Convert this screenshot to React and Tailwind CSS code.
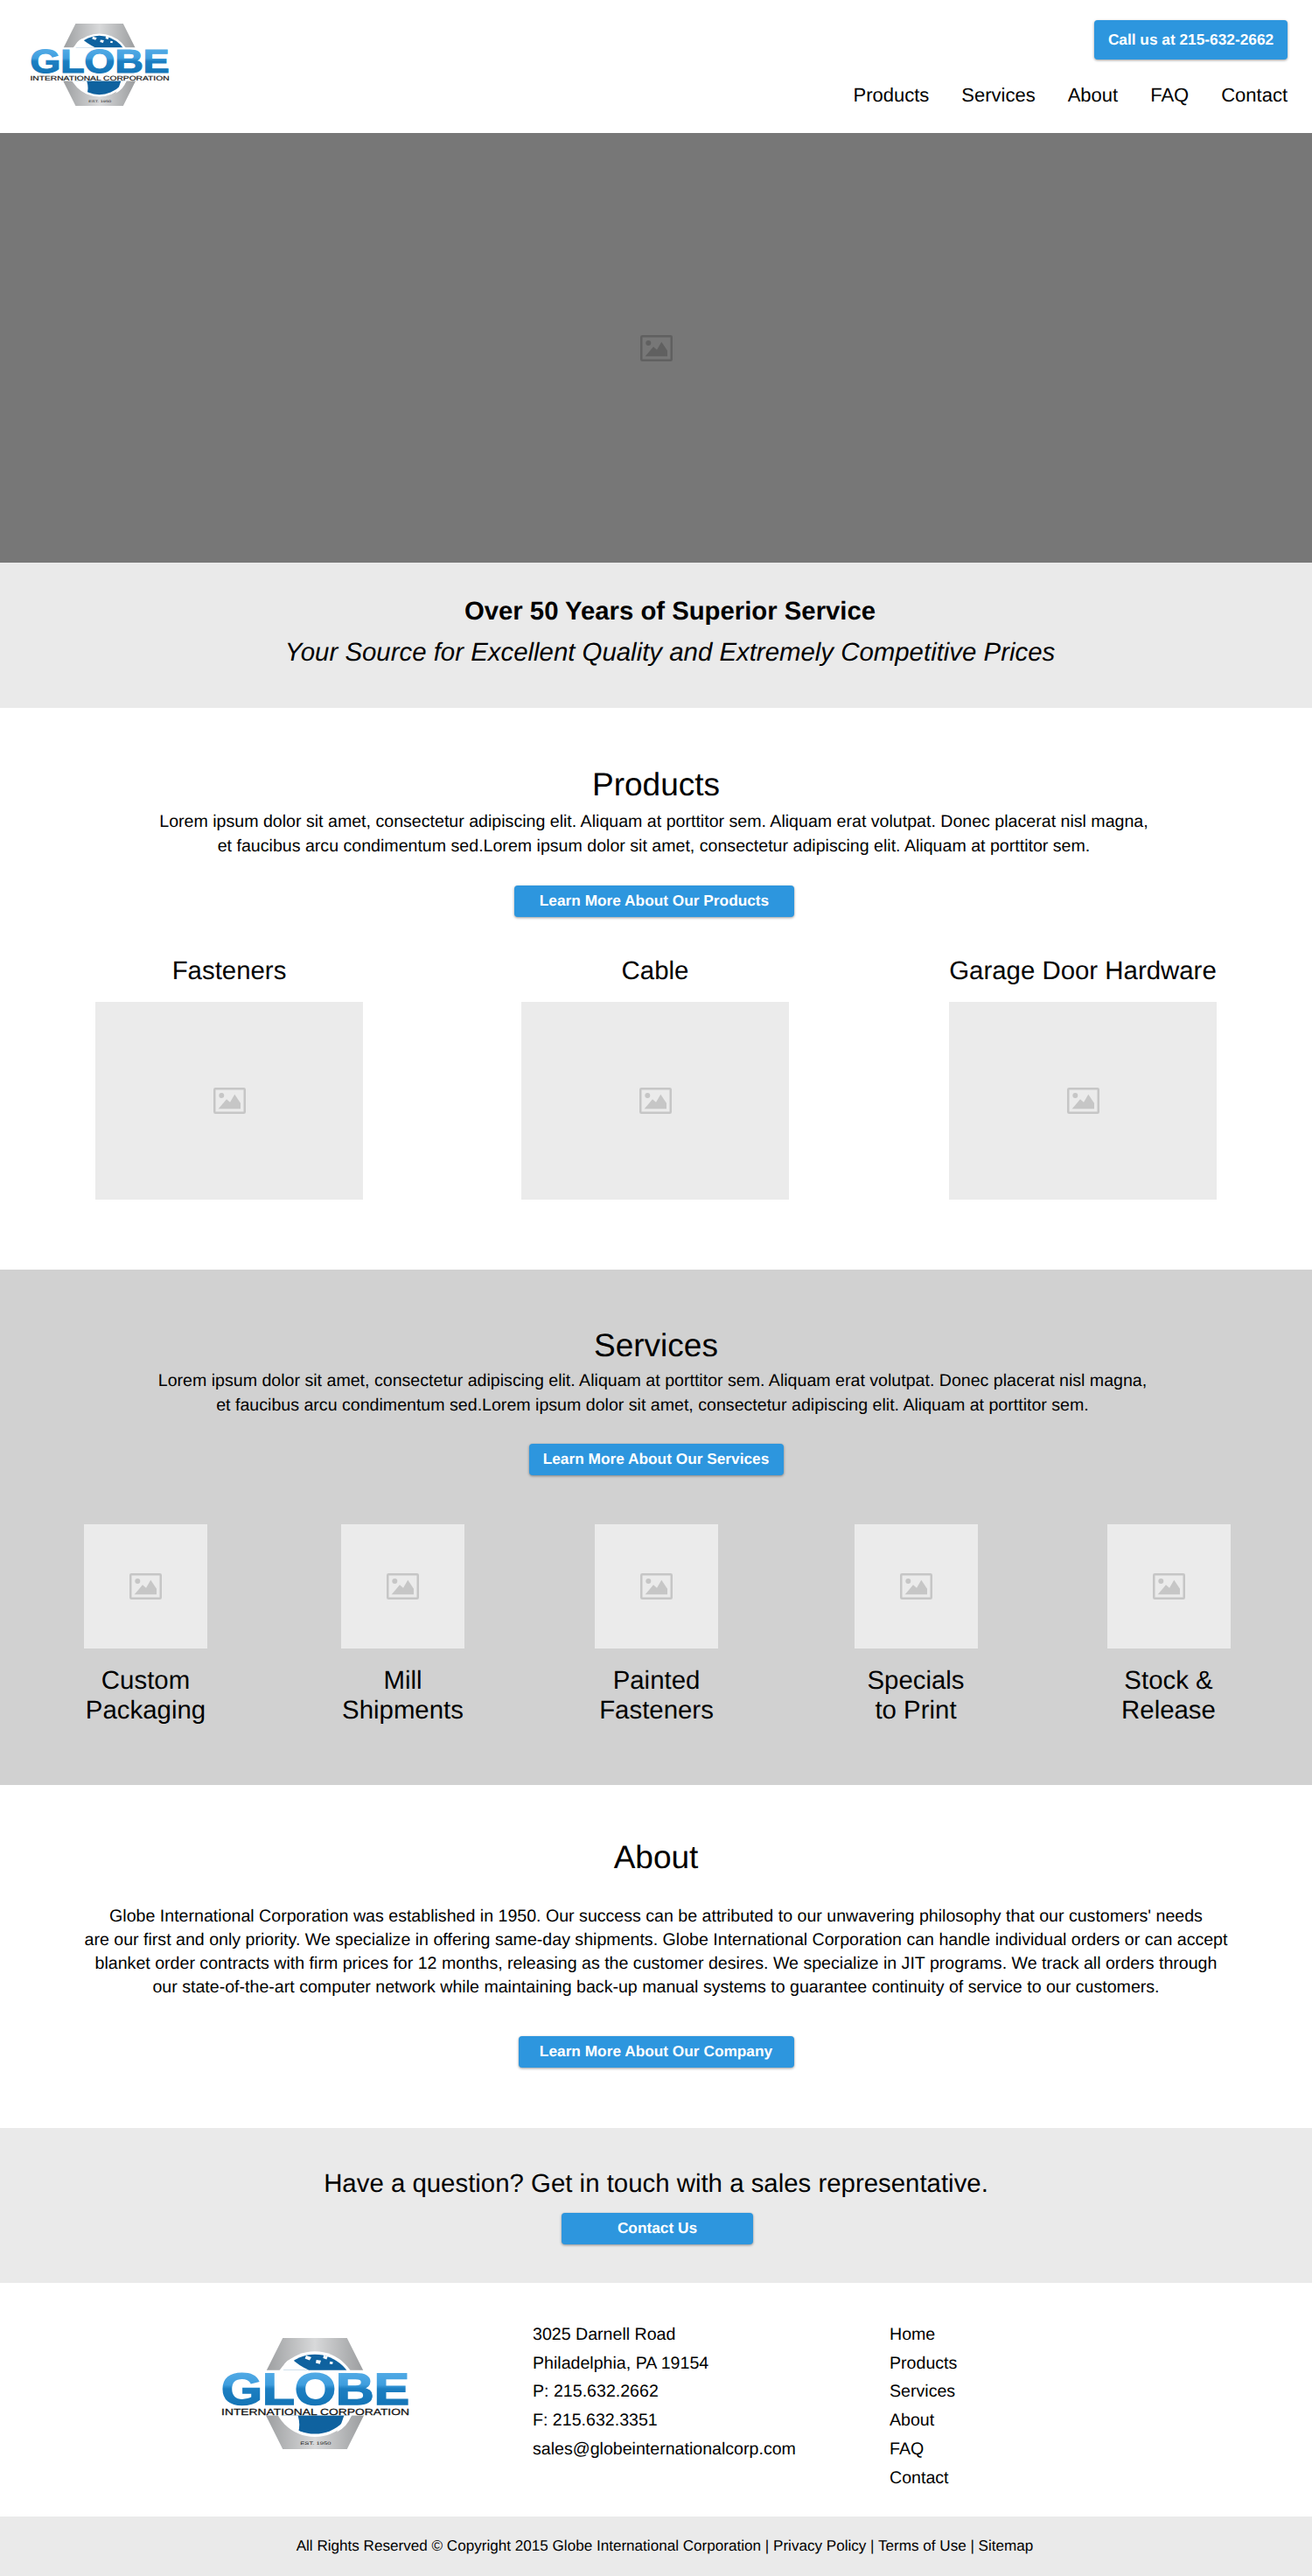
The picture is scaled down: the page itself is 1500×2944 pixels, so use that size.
import React from "react";

const font = "font-['Liberation_Sans',Arial,sans-serif] [text-rendering:geometricPrecision]";

const ImageIcon = ({ className }) => (
  <svg viewBox="0 0 37 30" className={`w-[37px] h-[30px] ${className}`} fill="currentColor">
    <rect x="1.25" y="1.25" width="34.5" height="27.5" rx="1" fill="none" stroke="currentColor" strokeWidth="2.5" />
    <circle cx="9.3" cy="9" r="3" />
    <path d="M5.7 24.3 L15 13.3 L19 16.7 L24.3 7.7 L31 17.7 V24.3 Z" />
  </svg>
);

const Placeholder = ({ className }) => (
  <div className={`bg-[#ebebeb] flex items-center justify-center ${className}`}>
    <ImageIcon className="text-[#c6c6c6]" />
  </div>
);

const Logo = ({ className }) => (
  <svg viewBox="0 0 643 380" className={className}>
    <defs>
      <linearGradient id="steel" x1="0" y1="0" x2="1" y2="0">
        <stop offset="0" stopColor="#8f9193" />
        <stop offset="0.5" stopColor="#d8d9da" />
        <stop offset="1" stopColor="#8d8f91" />
      </linearGradient>
      <linearGradient id="blueText" x1="0" y1="0" x2="0" y2="1">
        <stop offset="0" stopColor="#5fb3ea" />
        <stop offset="0.42" stopColor="#3f9ede" />
        <stop offset="0.5" stopColor="#1d7fc2" />
        <stop offset="1" stopColor="#0f6fb0" />
      </linearGradient>
    </defs>
    <path d="M210 0 H430 L525 190 L430 380 H210 L115 190 Z" fill="url(#steel)" />
    <circle cx="320" cy="192" r="146" fill="#ffffff" />
    <circle cx="320" cy="192" r="136" fill="#0f629f" />
    <path d="M205 110 Q215 80 240 70 Q262 92 300 110 Z" fill="#ffffff" />
    <path d="M290 60 l18 6 l-6 10 l-16 -6 Z M325 75 l16 2 l-4 12 l-14 -4 Z M350 60 l14 3 l-4 10 l-12 -4 Z M372 80 l10 2 l-2 8 l-10 -2 Z" fill="#ffffff" />
    <path d="M200 265 H262 Q272 300 262 325 Q225 305 200 265 Z M420 265 H445 Q430 305 395 322 Q412 295 420 265 Z" fill="#ffffff" />
    <rect x="0" y="110" width="643" height="155" fill="#ffffff" />
    <text x="0" y="226" textLength="643" lengthAdjust="spacingAndGlyphs" fontFamily="Liberation Sans" fontWeight="700" fontSize="153" stroke="url(#blueText)" strokeWidth="5" fill="url(#blueText)">
      GLOBE
    </text>
    <text x="0" y="262" textLength="643" lengthAdjust="spacingAndGlyphs" fontFamily="Liberation Sans" fontWeight="400" fontSize="31" stroke="#111111" strokeWidth="0.8" fill="#111111">
      INTERNATIONAL CORPORATION
    </text>
    <text x="270" y="365" textLength="105" lengthAdjust="spacingAndGlyphs" fontFamily="Liberation Sans" fontSize="15" fill="#222222">
      EST. 1950
    </text>
  </svg>
);

const BlueButton = ({ children, className }) => (
  <a className={`inline-flex items-center justify-center h-[36px] bg-[#2d96de] text-white font-bold text-[17.3px] rounded-[4px] shadow-[0_1px_3px_rgba(0,0,0,0.4)] ${className}`}>
    {children}
  </a>
);

const products = ["Fasteners", "Cable", "Garage Door Hardware"];

const services = [
  ["Custom", "Packaging"],
  ["Mill", "Shipments"],
  ["Painted", "Fasteners"],
  ["Specials", "to Print"],
  ["Stock &", "Release"],
];

const navLinks = ["Products", "Services", "About", "FAQ", "Contact"];
const footerLinks = ["Home", "Products", "Services", "About", "FAQ", "Contact"];

const Lorem = ({ className }) => (
  <p className={`text-[19.6px] leading-[28px] ${className}`}>
    Lorem ipsum dolor sit amet, consectetur adipiscing elit. Aliquam at porttitor sem. Aliquam erat volutpat. Donec placerat nisl magna,
    <br />
    et faucibus arcu condimentum sed.Lorem ipsum dolor sit amet, consectetur adipiscing elit. Aliquam at porttitor sem.
  </p>
);

export default function App() {
  return (
    <div className={`${font} w-full bg-white text-black`}>
      <header className="h-[152px] flex justify-between pl-[34px] pr-[28px]">
        <Logo className="w-[160px] h-[94px] mt-[27px]" />
        <div className="flex flex-col items-end pt-[23px]">
          <a className="flex items-center justify-center w-[221px] h-[45px] bg-[#2d96de] text-white font-bold text-[17.3px] rounded-[4px] shadow-[0_1px_3px_rgba(0,0,0,0.4)]">
            Call us at 215-632-2662
          </a>
          <nav className="flex gap-[37px] mt-[24px] text-[22px] leading-[34px]">
            {navLinks.map((link) => (
              <a key={link}>{link}</a>
            ))}
          </nav>
        </div>
      </header>

      <section className="h-[491px] bg-[#777777] flex items-center justify-center">
        <ImageIcon className="text-[#606060]" />
      </section>

      <section className="h-[166px] bg-[#eaeaea] flex flex-col items-center pt-[36px] pl-[32px]">
        <h2 className="text-[29.3px] leading-[40px] font-bold">Over 50 Years of Superior Service</h2>
        <p className="text-[29.4px] leading-[54px] italic">Your Source for Excellent Quality and Extremely Competitive Prices</p>
      </section>

      <section className="h-[642px] flex flex-col items-center pt-[65px]">
        <h2 className="text-[37px] leading-[46px]">Products</h2>
        <Lorem className="text-center mt-[5px] pr-[5px]" />
        <BlueButton className="w-[320px] mt-[31px] mr-[4px]">Learn More About Our Products</BlueButton>
        <div className="grid grid-cols-[488px_486px_492px] w-full pl-[18px] mt-[44px]">
          {products.map((name) => (
            <div key={name} className="flex flex-col items-center">
              <h3 className="text-[29.4px] leading-[36px]">{name}</h3>
              <Placeholder className="w-[306px] h-[226px] mt-[17px]" />
            </div>
          ))}
        </div>
      </section>

      <section className="h-[589px] bg-[#d1d1d1] flex flex-col items-center pt-[64px]">
        <h2 className="text-[37px] leading-[46px]">Services</h2>
        <Lorem className="text-center mt-[3px] pr-[8px]" />
        <BlueButton className="w-[291px] mt-[30px]">Learn More About Our Services</BlueButton>
        <div className="grid grid-cols-[333px_255px_325px_268px_310px] w-full mt-[56px]">
          {services.map(([a, b]) => (
            <div key={a} className="flex flex-col items-center">
              <Placeholder className="w-[141px] h-[142px]" />
              <h3 className="text-[29.4px] leading-[34px] text-center mt-[20px]">
                {a}
                <br />
                {b}
              </h3>
            </div>
          ))}
        </div>
      </section>

      <section className="h-[392px] flex flex-col items-center pt-[60px]">
        <h2 className="text-[37px] leading-[46px]">About</h2>
        <p className="text-[19.6px] leading-[27px] text-center mt-[31px]">
          Globe International Corporation was established in 1950. Our success can be attributed to our unwavering philosophy that our customers' needs
          <br />
          are our first and only priority. We specialize in offering same-day shipments. Globe International Corporation can handle individual orders or can accept
          <br />
          blanket order contracts with firm prices for 12 months, releasing as the customer desires. We specialize in JIT programs. We track all orders through
          <br />
          our state-of-the-art computer network while maintaining back-up manual systems to guarantee continuity of service to our customers.
        </p>
        <BlueButton className="w-[315px] mt-[42px]">Learn More About Our Company</BlueButton>
      </section>

      <section className="h-[177px] bg-[#eaeaea] flex flex-col items-center pt-[44px]">
        <h2 className="text-[29.4px] leading-[40px]">Have a question? Get in touch with a sales representative.</h2>
        <BlueButton className="w-[219px] mt-[13px] ml-[3px]">Contact Us</BlueButton>
      </section>

      <footer className="h-[267px] flex pt-[43px] text-[19.6px] leading-[32.7px]">
        <div className="w-[609px] pl-[253px] pt-[20px]">
          <Logo className="w-[215px] h-[127px]" />
        </div>
        <div className="w-[408px]">
          <p>3025 Darnell Road</p>
          <p>Philadelphia, PA 19154</p>
          <p>P: 215.632.2662</p>
          <p>F: 215.632.3351</p>
          <p>sales@globeinternationalcorp.com</p>
        </div>
        <div>
          {footerLinks.map((link) => (
            <p key={link}>{link}</p>
          ))}
        </div>
      </footer>

      <div className="h-[68px] bg-[#eaeaea] flex items-center justify-center text-[17.1px] pl-[20px]">
        All Rights Reserved © Copyright 2015 Globe International Corporation | Privacy Policy | Terms of Use | Sitemap
      </div>
    </div>
  );
}
